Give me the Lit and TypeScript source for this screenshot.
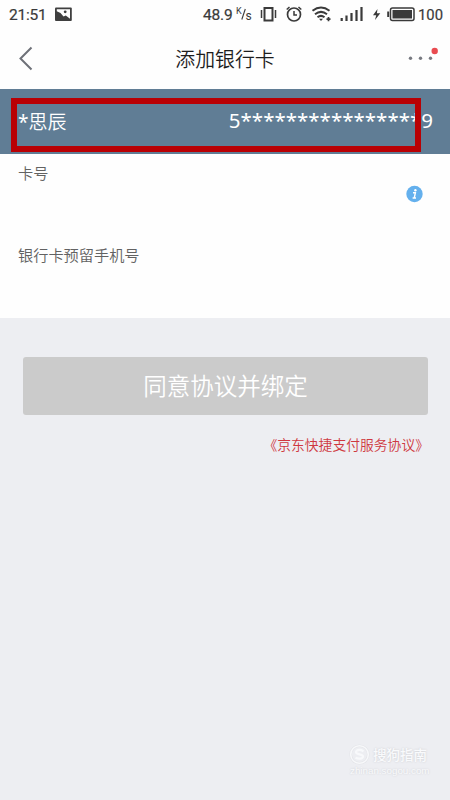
import { LitElement, html, css } from "lit";
import { customElement, property } from "lit/decorators.js";

@customElement("status-bar")
class StatusBar extends LitElement {
  static styles = css`
    :host { display: flex; height: 30px; align-items: center; box-sizing: border-box; padding: 0 0 2px 9px; color: #3a3a3a; font: 400 15.5px/28px Roboto, sans-serif; white-space: nowrap; }
    .time, .speed { padding-top: 1px; }
    .time { width: 46px; letter-spacing: -0.2px; -webkit-text-stroke: 0.2px; }
    .speed { width: 33px; margin-left: 131px; letter-spacing: -0.2px; -webkit-text-stroke: 0.2px; }
    svg { display: block; flex: none; }
    .level { margin-left: 2px; font-size: 14.8px; padding-top: 1px; -webkit-text-stroke: 0.2px; }
  `;
  render() {
    return html`
      <span class="time">21:51</span>
      <svg width="17" height="28" viewBox="55 0 17 28">
        <rect x="55" y="7.500" width="16.800" height="13.500" rx="1" fill="#3f3f3f" />
        <path d="M56.800 9.300H70V18.800L65.800 15.500L63.500 16.500L60.500 13L56.800 11.200Z" fill="#fff" />
        <circle cx="65.200" cy="11.800" r="1.400" fill="#3f3f3f" />
      </svg>
      <span class="speed">48.9</span>
      <svg width="24" height="28" viewBox="235 0 24 28">
        <text x="235" y="14" font-size="9" fill="#3a3a3a">K</text>
        <path d="M240.800 19.500L244.300 9" stroke="#3a3a3a" stroke-width="1.100" />
        <text x="244.500" y="20" font-size="12" fill="#3a3a3a">s</text>
      </svg>
      <svg width="156" height="28" viewBox="259.500 0 156 28" fill="none" stroke="#3a3a3a">
        <rect x="264" y="8" width="8" height="12.500" stroke-width="2" />
        <path d="M261 10V18M275 10V18" stroke-width="1.500" />
        <circle cx="293.500" cy="14.500" r="6.500" stroke-width="1.700" />
        <path d="M293.500 11V15H296.500M286.200 9.500L289 7M300.800 9.500L298 7" stroke-width="1.500" />
        <path d="M312 10.700Q320.500 4.200 329 10.700M314.500 14.200Q320.500 9.500 326.500 14.200M317 17.200Q320.500 14.500 324 17.200" stroke-width="2" />
        <path d="M318.500 18.700H322.500L320.500 21Z" fill="#3a3a3a" stroke="none" />
        <path d="M328 17V21.200M326 19.100H330" stroke-width="1.700" />
        <path d="M341.200 18V21M346 15.500V21M351 13V21M356 10V21M361 7V21" stroke-width="2.200" />
        <path d="M377 9L372.500 15.300H375.700L374.500 20L379.800 13.300H376.400Z" fill="#3a3a3a" stroke="none" />
        <rect x="390" y="8" width="23.500" height="12.500" rx="2" stroke-width="1.500" />
        <rect x="392" y="10" width="19.500" height="8.500" fill="#3a3a3a" stroke="none" />
        <path d="M387.700 11.500V17" stroke-width="2" />
      </svg>
      <span class="level">100</span>
    `;
  }
}

@customElement("title-bar")
class TitleBar extends LitElement {
  @property() heading = "";
  static styles = css`
    :host { display: grid; grid-template-columns: 60px 1fr 60px; align-items: center; height: 59px; color: #1d1d1d; text-align: center; }
    .heading { font: 350 19.900px/30px "Noto Sans CJK SC", sans-serif; padding-bottom: 2px; }
    svg { display: block; }
  `;
  render() {
    return html`
      <svg width="60" height="59" viewBox="30 0 60 59"><path d="M61.500 17.500L50.500 28.500L61.500 39.500" fill="none" stroke="#6e7178" stroke-width="2" /></svg>
      <div class="heading">${this.heading}</div>
      <svg width="60" height="59" viewBox="390 30 60 59">
        <g fill="#777980"><circle cx="410.500" cy="58.200" r="1.700" /><circle cx="420.500" cy="58.200" r="1.700" /><circle cx="430.500" cy="58.200" r="1.700" /></g>
        <circle cx="434.700" cy="51" r="3.200" fill="#e94b50" />
      </svg>
    `;
  }
}

@customElement("app-root")
class AppRoot extends LitElement {
  static styles = css`
    :host { display: flex; flex-direction: column; height: 800px; width: 450px; position: relative; overflow: hidden; background: #edeef2; font-family: "Noto Sans", "Noto Sans CJK SC", sans-serif; }
    status-bar, title-bar { background: #fefefe; flex: none; }
    .holder { position: relative; flex: none; height: 65px; box-sizing: border-box; padding: 18px 17px 0 18px; display: flex; justify-content: space-between; background: #607d95; color: #fff; font-size: 20px; line-height: 28px; }
    .name { font: 350 19px/28px "Noto Sans CJK SC", sans-serif; }
    .star { font: 400 19px/24px "Noto Sans", sans-serif; }
    .number { font-size: 20.500px; line-height: 27px; }
    .marker { position: absolute; left: 11px; top: 9px; width: 410px; height: 54px; box-sizing: border-box; border: 6px solid #b90004; }
    .form { flex: none; height: 164px; background: #fefefe; color: #626262; font: 350 15.200px/22px "Noto Sans CJK SC", sans-serif; }
    .field { height: 82px; box-sizing: border-box; padding: 7px 27px 0 18px; display: flex; justify-content: space-between; }
    .info { margin-top: 24px; display: block; }
    .action { flex: none; margin: 39px 22px 0 23px; height: 58px; border: 0; border-radius: 3px; background: #cbcbcb; color: #fff; font: 350 23.500px/56px "Noto Sans CJK SC", sans-serif; padding: 0 0 2px; }
    .terms { align-self: flex-end; margin: 18px 21px 0 0; color: #cf3840; font: 350 13.800px/22px "Noto Sans CJK SC", sans-serif; }
    .watermark { position: absolute; left: 349px; top: 743px; color: #f9fafc; width: 80px; text-shadow: 0 0 2px #c8c9cd; }
    .brand { display: flex; align-items: center; gap: 3px; font: 500 13.500px/22px "Noto Sans CJK SC", sans-serif; white-space: nowrap; }
    .site { font: 9.800px/12px "Liberation Sans", sans-serif; padding-left: 1px; }
  `;
  render() {
    return html`
      <status-bar></status-bar>
      <title-bar heading="添加银行卡"></title-bar>
      <div class="holder">
        <span class="name"><span class="star">*</span>思辰</span>
        <span class="number">5****************9</span>
        <div class="marker"></div>
      </div>
      <div class="form">
        <div class="field">
          <span>卡号</span>
          <svg class="info" width="17" height="18" viewBox="0 0 17 18">
            <circle cx="8.500" cy="9" r="8.200" fill="#64b0ed" />
            <circle cx="9.400" cy="5.200" r="1.200" fill="#fff" />
            <path d="M7 7.800H9.400L8.200 13H10M6.600 13H8.200" fill="none" stroke="#fff" stroke-width="1.400" />
          </svg>
        </div>
        <div class="field"><span>银行卡预留手机号</span></div>
      </div>
      <button class="action">同意协议并绑定</button>
      <div class="terms">《京东快捷支付服务协议》</div>
      <div class="watermark">
        <div class="brand">
          <svg width="21" height="21" viewBox="0 0 21 21" fill="none">
            <circle cx="10.500" cy="10.500" r="8.800" stroke="#e3e4e8" stroke-width="2.600" />
            <circle cx="10.500" cy="10.500" r="8.800" stroke="#f7f8fa" stroke-width="1.600" />
            <path d="M14.500 7.200Q10.500 5 8 6.500C5.500 8.500 8 10 10.500 10.300C14 10.800 15 12.500 13 14Q10.500 15.500 6.500 13.800" stroke="#f8f9fb" stroke-width="2.200" />
          </svg>
          <span>搜狗指南</span>
        </div>
        <div class="site">zhinan.sogou.com</div>
      </div>
    `;
  }
}
